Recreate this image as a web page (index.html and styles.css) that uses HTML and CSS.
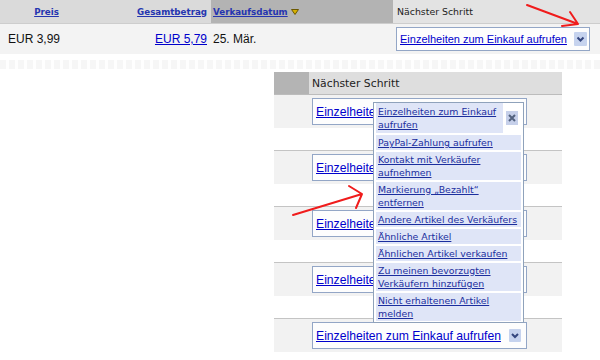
FILE: index.html
```html
<!DOCTYPE html>
<html lang="de">
<head>
  <meta charset="UTF-8">
  <title>Gekaufte Artikel</title>
  <link rel="stylesheet" href="styles.css">
</head>
<body>
  <!-- Original table -->
  <div class="orders">
    <div class="orders-head">
      <div class="hcell head-price"><a href="#">Preis</a></div>
      <div class="hcell head-total"><a href="#">Gesamtbetrag</a></div>
      <div class="hcell head-date">
        <a href="#">Verkaufsdatum</a>
        <svg width="8" height="6" viewBox="0 0 8 6"><polygon points="0.5,0.5 7.5,0.5 4,5.5" fill="#d6b000" stroke="#6b5800" stroke-width="1"/></svg>
      </div>
      <div class="hcell head-next">Nächster Schritt</div>
    </div>
    <div class="orders-row">
      <div class="cell row-price">EUR 3,99</div>
      <div class="cell row-total"><a href="#">EUR 5,79</a></div>
      <div class="cell row-date">25. Mär.</div>
      <div class="cell row-next">
        <div class="action action-small">
          <a href="#">Einzelheiten zum Einkauf aufrufen</a>
          <span class="drop"><svg width="13" height="14" viewBox="0 0 13 14"><polyline points="3.5,5.5 6.5,8.5 9.5,5.5" fill="none" stroke="#34467e" stroke-width="2"/></svg></span>
        </div>
      </div>
    </div>
  </div>

  <div class="torn"></div>

  <!-- Zoomed column with open menu -->
  <div class="zoomed">
    <div class="zhead">
      <div class="zside"></div>
      <div class="ztitle">Nächster Schritt</div>
    </div>

    <div class="zrow">
      <div class="zside"></div>
      <div class="zcell">
        <div class="action"><a href="#">Einzelheiten zum Einkauf aufrufen</a><span class="drop"><svg width="12" height="13" viewBox="0 0 12 13"><polyline points="3,5 6,8 9,5" fill="none" stroke="#34467e" stroke-width="2"/></svg></span></div>
      </div>
    </div>
    <div class="zgap"></div>
    <div class="zrow">
      <div class="zside"></div>
      <div class="zcell">
        <div class="action"><a href="#">Einzelheiten zum Einkauf aufrufen</a><span class="drop"><svg width="12" height="13" viewBox="0 0 12 13"><polyline points="3,5 6,8 9,5" fill="none" stroke="#34467e" stroke-width="2"/></svg></span></div>
      </div>
    </div>
    <div class="zgap"></div>
    <div class="zrow">
      <div class="zside"></div>
      <div class="zcell">
        <div class="action"><a href="#">Einzelheiten zum Einkauf aufrufen</a><span class="drop"><svg width="12" height="13" viewBox="0 0 12 13"><polyline points="3,5 6,8 9,5" fill="none" stroke="#34467e" stroke-width="2"/></svg></span></div>
      </div>
    </div>
    <div class="zgap"></div>
    <div class="zrow">
      <div class="zside"></div>
      <div class="zcell">
        <div class="action"><a href="#">Einzelheiten zum Einkauf aufrufen</a><span class="drop"><svg width="12" height="13" viewBox="0 0 12 13"><polyline points="3,5 6,8 9,5" fill="none" stroke="#34467e" stroke-width="2"/></svg></span></div>
      </div>
    </div>
    <div class="zgap"></div>
    <div class="zrow">
      <div class="zside"></div>
      <div class="zcell">
        <div class="action"><a href="#">Einzelheiten zum Einkauf aufrufen</a><span class="drop"><svg width="12" height="13" viewBox="0 0 12 13"><polyline points="3,5 6,8 9,5" fill="none" stroke="#34467e" stroke-width="2"/></svg></span></div>
      </div>
    </div>

    <!-- Open dropdown menu -->
    <ul class="popup">
      <li class="first">
        <a href="#" class="item">Einzelheiten zum Einkauf<br>aufrufen</a>
        <span class="close"><svg width="12" height="14" viewBox="0 0 12 14"><path d="M3 4 L9 10 M9 4 L3 10" stroke="#52627f" stroke-width="2"/></svg></span>
      </li>
      <li><a href="#" class="item">PayPal-Zahlung aufrufen</a></li>
      <li><a href="#" class="item">Kontakt mit Verkäufer<br>aufnehmen</a></li>
      <li><a href="#" class="item">Markierung „Bezahlt“<br>entfernen</a></li>
      <li><a href="#" class="item">Andere Artikel des Verkäufers</a></li>
      <li><a href="#" class="item">Ähnliche Artikel</a></li>
      <li><a href="#" class="item">Ähnlichen Artikel verkaufen</a></li>
      <li><a href="#" class="item">Zu meinen bevorzugten<br>Verkäufern hinzufügen</a></li>
      <li><a href="#" class="item">Nicht erhaltenen Artikel<br>melden</a></li>
    </ul>
  </div>

  <!-- Red annotation arrows -->
  <svg class="marks" width="600" height="360" viewBox="0 0 600 360">
    <g stroke="#f01c1c" stroke-width="2" fill="none" stroke-linecap="round" stroke-linejoin="round">
      <path d="M527 5 L578 24 M570 12 L578 24 L562 26"/>
      <path d="M293 215 L362 194 M349 186 L362 194 L356 208"/>
    </g>
  </svg>
</body>
</html>
```

FILE: styles.css
```css
body {
  margin: 0;
  background-color: #fff;
  font-family: "Liberation Sans", Arial, sans-serif;
  color: #111;
  position: relative;
  height: 360px;
  overflow: hidden;
}
a {
  color: #0000cc;
}

/* original table */
.orders-head,
.orders-row {
  display: grid;
  grid-template-columns: 93px 118px 182px 1fr;
}
.orders-head {
  height: 23px;
  border-bottom: 1px solid #cdcdcd;
  font-family: "DejaVu Sans", sans-serif;
}
.hcell {
  display: flex;
  align-items: center;
  background-color: #dadada;
}
.hcell a {
  font-size: 8.7px;
  font-weight: bold;
  color: #2535b0;
}
.head-price {
  justify-content: center;
}
.head-total {
  justify-content: flex-end;
  padding-right: 4px;
}
.head-date {
  background-color: #b3b3b3;
  padding-left: 2px;
  gap: 3px;
}
.head-next {
  background-color: #e3e3e3;
  padding-left: 4px;
  font-size: 9.4px;
  color: #222;
}
.orders-row {
  height: 30px;
  background-color: #f3f3f3;
  font-size: 12px;
}
.cell {
  display: flex;
  align-items: center;
}
.row-price {
  padding-left: 8px;
}
.row-total {
  justify-content: flex-end;
  padding-right: 4px;
}
.row-date {
  padding-left: 2px;
}
.row-next {
  padding-left: 3px;
}

/* action box with dropdown */
.action {
  box-sizing: border-box;
  display: flex;
  align-items: center;
  width: 215px;
  height: 27px;
  padding: 0 5px 0 3px;
  border: 1px solid #93a6c6;
  background-color: #fdfdfd;
  font-size: 12.2px;
}
.action-small {
  width: 194px;
  height: 24px;
  padding: 0 2px 0 3px;
  font-size: 11px;
}
.drop {
  display: flex;
  margin-left: auto;
  background-color: #c6d3ee;
  border-radius: 1px;
}

.torn {
  height: 9px;
  margin-top: 6px;
  background: repeating-linear-gradient(90deg, #f6f6f6 0 6px, #fefefe 6px 9px);
}

/* zoomed column */
.zoomed {
  position: relative;
  width: 288px;
  margin: 3px 0 0 274px;
}
.zhead {
  display: flex;
  height: 22px;
  border-bottom: 1px solid #bcbcbc;
}
.zside {
  width: 35px;
  flex-shrink: 0;
}
.zhead .zside {
  background-color: #b4b4b4;
}
.ztitle {
  flex: 1;
  display: flex;
  align-items: center;
  padding-left: 3px;
  background-color: #dedede;
  font-family: "DejaVu Sans", sans-serif;
  font-size: 10.8px;
  color: #222;
}
.zrow {
  display: flex;
  height: 33px;
  background-color: #f2f2f2;
}
.zgap + .zrow {
  border-top: 1px solid #c4c4c4;
}
.zcell {
  display: flex;
  align-items: center;
  padding-left: 3px;
}
.zgap {
  height: 22px;
}

/* popup menu */
.popup {
  position: absolute;
  left: 99px;
  top: 30px;
  width: 145px;
  margin: 0;
  padding: 0 2px 1px 2px;
  list-style: none;
  background-color: #fff;
  border: 1px solid #8fa2bb;
  display: flex;
  flex-direction: column;
  gap: 2px;
  font-family: "DejaVu Sans", sans-serif;
  font-size: 9.4px;
  line-height: 13px;
}
.popup li {
  display: flex;
}
.item {
  flex: 1;
  padding: 1px 2px;
  background-color: #dfe5f7;
  color: #1b2e9e;
  white-space: nowrap;
}
.first {
  align-items: center;
}
.first .item {
  padding: 2px;
}
.close {
  display: flex;
  margin: 0 3px;
  background-color: #c6d0ea;
}

.marks {
  position: absolute;
  left: 0;
  top: 0;
  pointer-events: none;
}
```
